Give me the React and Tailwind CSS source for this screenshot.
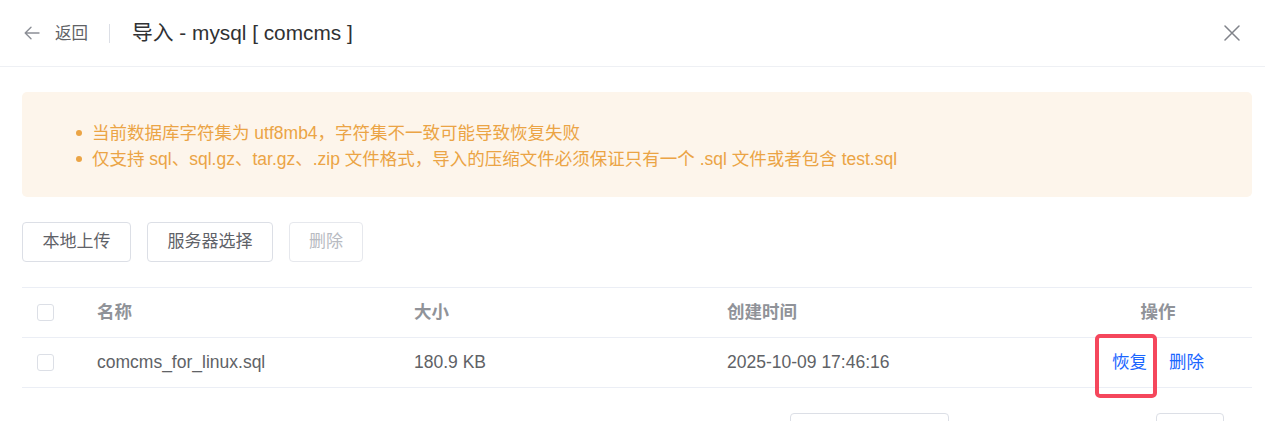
import React from "react";

const font = { fontFamily: '"Liberation Sans", "Noto Sans CJK SC", sans-serif' };

function Checkbox() {
  return <span className="block w-[17px] h-[17px] rounded-[3px] border border-[#dcdfe6] bg-white" />;
}

export default function App() {
  return (
    <div className="w-[1265px] h-[421px] overflow-hidden bg-white" style={font}>
      {/* Header */}
      <div className="h-[67px] flex items-center border-b border-[#eef0f4] pl-[24px] pr-[24px]">
        <svg width="16" height="14" viewBox="0 0 16 14" fill="none" stroke="#8c8f96" strokeWidth="1.4" strokeLinecap="round" strokeLinejoin="round">
          <path d="M15 7H1.5M7 1.2L1.2 7L7 12.8" />
        </svg>
        <span className="ml-[15px] text-[16.5px] text-[#606266]">返回</span>
        <span className="ml-[21px] w-px h-[19px] bg-[#dcdfe6]" />
        <span className="ml-[22px] text-[20.8px] text-[#303133]">导入 - mysql [ comcms ]</span>
        <svg className="ml-auto mr-[1px]" width="16" height="16" viewBox="0 0 16 16" fill="none" stroke="#80838a" strokeWidth="1.5" strokeLinecap="round">
          <path d="M1 1L15 15M15 1L1 15" />
        </svg>
      </div>

      <div className="pl-[22px] pr-[13px] pt-[25px]">
        {/* Alert */}
        <div className="h-[105px] rounded-[5px] bg-[#fdf5eb] pl-[54px] pt-[28px]">
          <ul className="text-[17.5px] leading-[26px] text-[#eba445]">
            <li className="flex items-center">
              <span className="w-[6px] h-[6px] rounded-full bg-[#eba445] mr-[10px]" />
              当前数据库字符集为 utf8mb4，字符集不一致可能导致恢复失败
            </li>
            <li className="flex items-center">
              <span className="w-[6px] h-[6px] rounded-full bg-[#eba445] mr-[10px]" />
              仅支持 sql、sql.gz、tar.gz、.zip 文件格式，导入的压缩文件必须保证只有一个 .sql 文件或者包含 test.sql
            </li>
          </ul>
        </div>

        {/* Buttons */}
        <div className="mt-[25px] flex gap-[16px]">
          <button className="w-[109px] h-[40px] rounded-[4px] border border-[#dcdfe6] text-[17px] text-[#5f6268] bg-white">本地上传</button>
          <button className="w-[126px] h-[40px] rounded-[4px] border border-[#dcdfe6] text-[17px] text-[#5f6268] bg-white">服务器选择</button>
          <button className="w-[74px] h-[40px] rounded-[4px] border border-[#e6e8ed] text-[17px] text-[#b8bbc2] bg-white">删除</button>
        </div>

        {/* Table */}
        <div className="mt-[25px] w-[1230px] border-t border-[#ebeef5] text-[17.5px]">
          <div className="grid grid-cols-[75px_317px_313px_337px_188px] h-[50px] items-center border-b border-[#ebeef5] font-semibold text-[#909399]">
            <div className="pl-[15px]"><Checkbox /></div>
            <div>名称</div>
            <div>大小</div>
            <div>创建时间</div>
            <div className="text-center">操作</div>
          </div>
          <div className="relative grid grid-cols-[75px_317px_313px_337px_188px] h-[50px] items-center border-b border-[#ebeef5] text-[#606266]">
            <div className="pl-[15px]"><Checkbox /></div>
            <div>comcms_for_linux.sql</div>
            <div>180.9 KB</div>
            <div>2025-10-09 17:46:16</div>
            <div className="flex justify-center gap-[22px] text-[#1a66ff]">
              <span>恢复</span>
              <span>删除</span>
            </div>
            <div className="absolute left-[1073px] top-[-4px] w-[62px] h-[64px] rounded-[5px] border-[4px] border-[#f5475c]" />
          </div>
        </div>

        {/* Pagination (cut off) */}
        <div className="mt-[25px] flex">
          <div className="ml-[768px] w-[159px] h-[32px] rounded-[4px] border border-[#dcdfe6]" />
          <div className="ml-[207px] w-[68px] h-[32px] rounded-[4px] border border-[#dcdfe6]" />
        </div>
      </div>
    </div>
  );
}
